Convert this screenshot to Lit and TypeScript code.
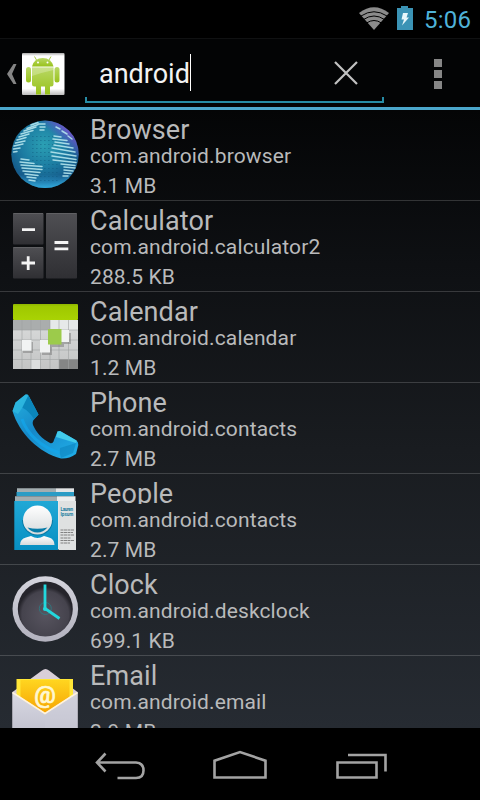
import { LitElement, html, svg, css, TemplateResult } from "lit";
import { customElement, property } from "lit/decorators.js";

const globeLines = (): TemplateResult[] => {
  const segs: number[][] = [
    // x1, y1, x2, y2: continents drawn as scan lines
    [31, 15, 38, 12.5], [27, 18.5, 38, 14.5], [24, 21, 36, 17], [21, 24, 33, 20.5], [19, 27, 29, 24],
    [17, 30, 26, 27.5], [15.5, 33, 25, 31], [14, 36, 23, 34], [13.5, 39, 20, 38], [13.5, 42, 17, 41.5],
    [38, 14, 45, 14], [40, 17, 45, 17], [40, 20, 44, 20],
    [21, 49, 29, 50], [20, 52, 34, 53.5], [21, 55, 42, 56.5], [22, 58, 42, 59.5], [23, 61, 40, 62.5],
    [25, 64, 38, 65.5], [27, 67, 36, 68], [29, 70, 35, 71],
    [54, 26, 61, 27], [53, 29, 67, 30.5], [55, 32, 69, 34], [54, 35, 73, 38], [52, 38, 75, 42],
    [51, 42, 76, 46], [52, 46, 76, 49.5], [53, 50, 76, 52.5], [61, 54, 75, 55.5], [64, 57, 75, 58],
    [64, 60, 73, 61], [64, 63, 71, 63.5], [63, 66, 68, 66], [56, 17, 60, 19], [62, 21, 67, 24], [68, 26, 72, 29],
  ];
  return segs.map(([a, b, c, d]) => svg`<path d="M${a} ${b}L${c} ${d}"/>`);
};

const globeDots = (): TemplateResult[] => {
  const out: TemplateResult[] = [];
  for (let y = 26; y < 72; y += 4)
    for (let x = 32; x < 60; x += 4)
      out.push(svg`<rect x=${x} y=${y} width="1.6" height="1"/>`);
  return out;
};

const icons: Record<string, () => TemplateResult> = {
  browser: () => svg`
    <defs>
      <radialGradient id="g" cx=".48" cy=".36" r=".66">
        <stop offset="0" stop-color="#2ba0b4"/><stop offset=".5" stop-color="#1c7ca2"/>
        <stop offset=".85" stop-color="#155a8a"/><stop offset="1" stop-color="#2275a6"/>
      </radialGradient>
      <linearGradient id="p" x1=".5" y1=".5" x2="1" y2="0">
        <stop offset=".4" stop-color="#6a4fd0" stop-opacity="0"/><stop offset=".74" stop-color="#8a4fd8" stop-opacity=".85"/>
      </linearGradient>
      <linearGradient id="b" x1="0" y1="0" x2="0" y2="1">
        <stop offset=".8" stop-color="#35b5e8" stop-opacity="0"/><stop offset="1" stop-color="#35b5e8" stop-opacity=".8"/>
      </linearGradient>
    </defs>
    <circle cx="45" cy="44.3" r="33.7" fill="url(#g)"/>
    <circle cx="45" cy="44.3" r="33.7" fill="url(#p)"/>
    <circle cx="45" cy="44.3" r="33.7" fill="url(#b)"/>
    <g fill="#0e5479" opacity=".4">${globeDots()}</g>
    <g stroke="#b5e6ee" stroke-width="1.500" stroke-linecap="round" opacity=".9">${globeLines()}</g>`,
  calculator: () => svg`
    <defs><linearGradient id="k" x1="0" y1="0" x2="0" y2="1">
      <stop offset="0" stop-color="#4f4f53"/><stop offset="1" stop-color="#2f2f33"/></linearGradient></defs>
    <rect x="13" y="12" width="30.5" height="31.5" rx="1" fill="url(#k)"/>
    <rect x="13" y="46" width="30.5" height="31.5" rx="1" fill="url(#k)"/>
    <rect x="46" y="12" width="31" height="65.5" rx="1" fill="url(#k)"/>
    <path d="M13.5 12.5H43M46.5 12.5H76.5M13.5 46.5H43" stroke="#606063"/>
    <path d="M22 28.7H35M21.5 62H35M28.2 55.3V69M54.5 41.5H68.3M54.5 47.8H68.3" stroke="#f4f4f4" stroke-width="2.8"/>`,
  calendar: () => svg`
    <defs>
      <linearGradient id="c" x1="0" y1="0" x2="0" y2="1"><stop offset="0" stop-color="#8fb500"/><stop offset=".15" stop-color="#9fc800"/><stop offset="1" stop-color="#a9d304"/></linearGradient>
      <linearGradient id="d" x1="0" y1="0" x2="0" y2="1"><stop offset="0" stop-color="#dadcdc"/><stop offset="1" stop-color="#c3c4c4"/></linearGradient>
    </defs>
    <rect x="13" y="28" width="65" height="49" fill="url(#d)"/>
    <path d="M13 28H50V38H13Z" fill="#aaadad"/><path d="M50 28H78V38H50Z" fill="#e6e9e9"/>
    <path d="M59 67H78V77H59Z" fill="#858686"/><path d="M31 67H40V77H31Z" fill="#dcdede"/>
    <path d="M22 28V77M31 28V77M40.500 28V77M50 28V77M59 28V77M68.500 28V77M13 38H78M13 48H78M13 58H78M13 67.500H78" stroke="#9fa2a2" stroke-width=".6"/>
    <rect x="13" y="12" width="65" height="16" rx="1" fill="url(#c)"/>
    <path d="M23 50H33V61H23ZM42 51H52V63H42ZM63 41H71V52H63ZM50 39H64V55H50Z" fill="#777" opacity=".5"/>
    <path d="M22 48H31.500V58.700H22ZM40 48H50V60.500H40ZM61 38H69V50H61Z" fill="#f1f3f3"/>
    <path d="M48 37H61.500V52.500H48Z" fill="#9ccb4b"/>`,
  phone: () => svg`
    <defs><linearGradient id="h" x1="0" y1="0" x2=".8" y2="1">
      <stop offset="0" stop-color="#24b1df"/><stop offset=".5" stop-color="#1688c8"/><stop offset="1" stop-color="#1fa9e4"/></linearGradient></defs>
    <path d="M15.500 19.500L25.500 11.500Q27.500 10.800 28.500 12.500L38.500 31.500L34 36.500Q32 38.500 33 42C36 49 42 56 50 60Q53 61 54 57L57.500 48.500L60 48L76.500 57.500Q78.500 59 78.300 62L76 71Q69 76 61 75.500C39 70 19 50 12.500 28Z" fill="url(#h)"/>
    <path d="M28.500 12.500L38.500 31.500L34 36Q29 28 22 24.500Z" fill="#0b86bb"/>
    <path d="M57.500 48.500L60 48L76.500 57.500Q77 59 76 60L56 54Z" fill="#42cbea"/>
    <path d="M15.500 19.500L25.500 11.500L28 12.500L22.500 24.500L18 31L12.500 28Z" fill="#34bfe3" opacity=".6"/>
    <path d="M22 36C27 51 41 64 60 70" stroke="#13a7ed" stroke-width="3" fill="none" opacity=".7"/>
    <path d="M76 60L73 70L61 75Q59 70 60 65Z" fill="#0a7eb7" opacity=".5"/>`,
  people: () => svg`
    <defs><linearGradient id="q" x1="0" y1="0" x2="0" y2="1"><stop offset="0" stop-color="#20a8d6"/><stop offset="1" stop-color="#078fc2"/></linearGradient>
    <linearGradient id="r" x1="0" y1="0" x2="0" y2="1"><stop offset="0" stop-color="#fff"/><stop offset="1" stop-color="#d6dadc"/></linearGradient></defs>
    <path d="M17 14.300H56V18H17Z" fill="#a3adb0"/><path d="M56 14.300H74V18.500H56Z" fill="#e2e4e5"/>
    <path d="M16.500 18H74V22.300H16.500Z" fill="#2b9cc5"/>
    <path d="M15 22.300H57V27.300H15Z" fill="#a3adb0"/><path d="M57 22.300H75.500V75H57Z" fill="#eceeee"/>
    <path d="M14.300 27H58V76H14.300Z" fill="url(#q)"/>
    <path d="M58.500 27H76V76H58.500Z" fill="#dfe1e1"/>
    <path d="M23 46A14.500 14.500 0 0 0 52 46" stroke="#087aa5" stroke-width="2" fill="none"/>
    <circle cx="37.500" cy="46" r="14.500" fill="url(#r)"/>
    <path d="M27.500 53.500Q37 56 47.500 53.500Q43 58.500 37.500 58.500Q31.500 58.500 27.500 53.500Z" fill="#087ca8"/>
    <path d="M20 71Q20 65 26 63.500L31 62Q37.500 66 44 62L49 63.500Q54.500 65 54.500 71Z" fill="url(#r)"/>
    <text x="60.500" y="37" font-size="4.600" font-weight="700" textLength="12.500" fill="#21809f" font-family="Roboto">Lauren</text>
    <text x="60.500" y="41.500" font-size="4.600" font-weight="700" fill="#21809f" font-family="Roboto">Ipsum</text>
    <path d="M60.500 56H74M60.500 58.500H73M60.500 61H74M60.500 64H71M60.500 66.500H74M60.500 69H70" stroke="#777" stroke-width=".9" stroke-dasharray="3 .5"/>`,
  clock: () => svg`
    <defs><linearGradient id="m" x1="0" y1="0" x2="0" y2="1"><stop offset="0" stop-color="#d4d4dc"/><stop offset="1" stop-color="#b3b2be"/></linearGradient>
    <radialGradient id="n" cy=".6"><stop offset="0" stop-color="#57545f"/><stop offset=".85" stop-color="#45434d"/><stop offset="1" stop-color="#25242b"/></radialGradient></defs>
    <circle cx="45.300" cy="44" r="32.800" fill="url(#m)"/>
    <circle cx="45.300" cy="44" r="27.500" fill="url(#n)"/>
    <circle cx="45.300" cy="43.500" r="6" fill="none" stroke="#277f86" stroke-width=".8"/>
    <path d="M45 19.500V43.500L59.500 53.500" fill="none" stroke="#22d8dd" stroke-width="2.800"/>
    <circle cx="45" cy="44" r="2" fill="#22d8dd"/>`,
  email: () => svg`
    <defs><linearGradient id="e" x1="0" y1="0" x2="0" y2="1"><stop offset="0" stop-color="#ffd520"/><stop offset="1" stop-color="#f5a000"/></linearGradient>
    <linearGradient id="f" x1="0" y1="0" x2="0" y2="1"><stop offset="0" stop-color="#d9d9e3"/><stop offset="1" stop-color="#b9b9c7"/></linearGradient></defs>
    <path d="M12.500 36L42 14.500Q45.500 11.500 49 14.500L77.500 36V90H12.500Z" fill="#d9cfd8"/>
    <path d="M16.500 23H73V60H16.500Z" fill="#ffe637"/>
    <path d="M20.500 24H69.500V60H20.500Z" fill="url(#e)"/>
    <path d="M12.500 36L45 57L77.500 36V90H12.500Z" fill="url(#f)"/>
    <path d="M45 58L77.500 37V90H45Z" fill="#c9c9d6" opacity=".5"/>
    <path d="M12.500 36.500L45 57.500L77.500 36.500" fill="none" stroke="#fff3dc" stroke-width="1.500"/>
    <text x="45" y="47" text-anchor="middle" font-family="Roboto" font-size="24" font-weight="500" fill="#fff7d0" stroke="#fff7d0" stroke-width=".7">@</text>`,
};

interface AppInfo { icon: string; name: string; pkg: string; size: string; }

const apps: AppInfo[] = [
  { icon: "browser", name: "Browser", pkg: "com.android.browser", size: "3.1 MB" },
  { icon: "calculator", name: "Calculator", pkg: "com.android.calculator2", size: "288.5 KB" },
  { icon: "calendar", name: "Calendar", pkg: "com.android.calendar", size: "1.2 MB" },
  { icon: "phone", name: "Phone", pkg: "com.android.contacts", size: "2.7 MB" },
  { icon: "people", name: "People", pkg: "com.android.contacts", size: "2.7 MB" },
  { icon: "clock", name: "Clock", pkg: "com.android.deskclock", size: "699.1 KB" },
  { icon: "email", name: "Email", pkg: "com.android.email", size: "2.9 MB" },
];

@customElement("app-row")
export class AppRow extends LitElement {
  @property({ attribute: false }) app!: AppInfo;
  static styles = css`
    :host { display: flex; flex: none; height: 90px; border-bottom: 1px solid rgba(255, 255, 255, .17); color: #b9babb; }
    .icon { flex: none; width: 90px; height: 90px; }
    .text { display: flex; flex-direction: column; white-space: nowrap; }
    .name { height: 30px; line-height: 41px; font-size: 27px; letter-spacing: .1px; overflow: hidden; }
    .pkg { height: 30px; line-height: 33px; font-size: 21px; letter-spacing: .13px; }
    .size { height: 30px; line-height: 33px; font-size: 21px; letter-spacing: .1px; }
  `;
  render() {
    return html`
      <svg class="icon" viewBox="0 0 90 90">${icons[this.app.icon]()}</svg>
      <div class="text">
        <div class="name">${this.app.name}</div>
        <div class="pkg">${this.app.pkg}</div>
        <div class="size">${this.app.size}</div>
      </div>`;
  }
}

@customElement("app-root")
export class AppRoot extends LitElement {
  static styles = css`
    :host { display: flex; flex-direction: column; width: 480px; height: 800px; overflow: hidden; background: #000;
      font-family: Roboto, "Liberation Sans", sans-serif; }
    .status { flex: none; height: 38px; display: flex; justify-content: flex-end; background: #000; }
    .glyphs { width: 66px; height: 38px; }
    .time { width: 57px; box-sizing: border-box; padding-left: 1px; font-size: 24px; line-height: 40px; letter-spacing: .2px; color: #4fb3d9; }
    .bar { flex: none; height: 72px; box-sizing: border-box; display: flex; border-top: 1px solid #101112;
      border-bottom: 3px solid #4ba7cc; background: #030405; }
    .up { flex: none; width: 85px; height: 68px; }
    .field { width: 299px; height: 64px; position: relative; display: flex; align-items: center; }
    .query { padding-left: 14px; font-size: 27px; line-height: 36px; color: #f3f3f3; padding-top: 6px; }
    .caret { width: 1px; height: 37px; background: #fff; margin-top: 3px; }
    .edge { box-sizing: border-box; position: absolute; left: 0; right: 0; bottom: 0; height: 6px; border: 2px solid #268ca6; border-top-width: 0; }
    .clear { width: 28px; height: 28px; margin-left: auto; margin-right: 24px; margin-top: 3px; }
    .menu { width: 96px; height: 68px; }
    .list { flex: 1; min-height: 0; overflow: hidden; display: flex; flex-direction: column;
      background: linear-gradient(#040506, #0e1013 25%, #191c20 55%, #262b32); }
    .nav { flex: none; width: 480px; height: 72px; background: #000; }
  `;
  render() {
    return html`
      <div class="status">
        <svg class="glyphs" viewBox="357 0 66 38">
          <path d="M374 30L359 13Q374 1.500 389 13Z" fill="#8b8b8b"/>
          <path d="M361 16Q374 7.500 387 16M363.500 19.500Q374 12.500 384.500 19.500M366.500 23Q374 18 381.500 23" fill="none" stroke="#000" stroke-width="1"/>
          <path d="M397 8H401V6H408V8H413V30H397Z" fill="#3b93b5"/>
          <path d="M403 13H408L406.500 17.500H409L402 25.500L404 19.500H401.500Z" fill="#e8f7fb"/>
        </svg>
        <div class="time">5:06</div>
      </div>
      <div class="bar">
        <svg class="up" viewBox="0 39 85 68">
          <defs>
            <linearGradient id="w" x1="0" y1="0" x2="0" y2="1"><stop offset="0" stop-color="#a8a8a8"/><stop offset=".07" stop-color="#fff"/><stop offset=".85" stop-color="#fff"/><stop offset="1" stop-color="#bbb"/></linearGradient>
            <linearGradient id="a" x1="0" y1="0" x2="0" y2="1"><stop offset="0" stop-color="#b9d865"/><stop offset="1" stop-color="#98c21a"/></linearGradient>
          </defs>
          <path d="M13.500 64H16.500L12 74L16.500 84H13.500L7 74Z" fill="#858585"/>
          <rect x="22" y="53" width="42.500" height="42" rx="1" fill="url(#w)"/>
          <g fill="url(#a)">
            <path d="M32 66.500A10.800 9.500 0 0 1 53.500 66.500Z"/>
            <path d="M32 67.500H53.500V84Q53.500 86.500 51 86.500H50V94.500H45V86.500H41V94.500H36V86.500H34.500Q32 86.500 32 84Z"/>
            <rect x="26" y="67" width="5" height="15.500" rx="2.500"/><rect x="54.500" y="67" width="5" height="15.500" rx="2.500"/>
          </g>
          <path d="M36.500 60L34.500 56.500M49 60L51 56.500" stroke="#a9cb4b" stroke-width="1"/>
          <path d="M32 67.500H53.500V70Q44 72 32 76Z" fill="#fff" opacity=".25"/>
          <circle cx="38" cy="62.500" r="1" fill="#fff"/><circle cx="47.500" cy="62.500" r="1" fill="#fff"/>
        </svg>
        <div class="field">
          <span class="query">android</span><span class="caret"></span>
          <svg class="clear" viewBox="0 0 28 28"><path d="M3 3L25 25M25 3L3 25" stroke="#c2c2c2" stroke-width="2.200"/></svg>
          <div class="edge"></div>
        </div>
        <svg class="menu" viewBox="384 39 96 68"><path d="M434 59H442V67H434ZM434 70H442V78H434ZM434 81H442V89H434Z" fill="#868686"/></svg>
      </div>
      <div class="list">${apps.map((a) => html`<app-row .app=${a}></app-row>`)}</div>
      <svg class="nav" viewBox="0 728 480 72" fill="none" stroke="#a3a3a3" stroke-width="2.600">
        <path d="M97 762.500H136Q143.500 763 143.500 770.500Q143.500 778 136 778H117.500M105.500 753.500L97 762.500L105.500 771.500"/>
        <path d="M214.500 777.500V760.700L240 752L265.500 760.700V777.500Z"/>
        <path d="M337.500 762.500H376.500V777.500H337.500ZM348 755H385.500V771.500"/>
      </svg>`;
  }
}
